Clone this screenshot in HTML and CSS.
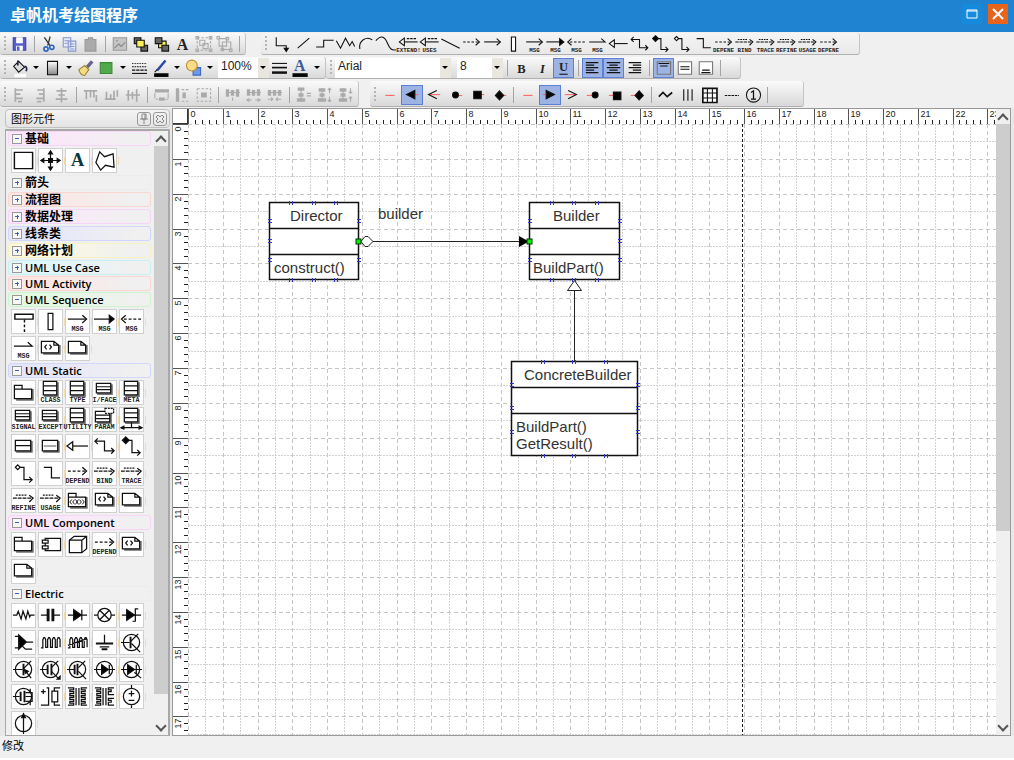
FILE: index.html
```html
<!DOCTYPE html>
<html lang="zh-CN">
<head>
    <meta charset="UTF-8">
    <meta name="viewport" content="width=device-width, initial-scale=1.0">
    <title>卓帆机考绘图程序</title>
    <link rel="stylesheet" href="styles.css">
</head>
<body>
    <!-- Title bar -->
    <header class="titlebar">
        <h1>卓帆机考绘图程序</h1>
        <button class="win-btn" aria-label="最大化"><svg width="12" height="10"><path d="M1 1h10v8H1zM1 2h10" /></svg></button>
        <button class="win-btn close" aria-label="关闭"><svg width="12" height="12"><path d="M1 1l10 10M11 1L1 11" /></svg></button>
    </header>

    <!-- Toolbars -->
    <div class="toolbars">
        <div class="bar-row">
            <div class="bar" data-icons="save | cut copy paste | image front back textA group ungroup |"></div>
            <div class="bar shapes" data-icons="elbow line step zigzag arc wave stereoLeft:EXTEND! stereoLeft:USES diag dashArrow openArrow bar openArrow:MSG solidArrow:MSG dashLeft:MSG halfArrow:MSG inherit elbowArrow elbowSolid elbowHollow elbowPlain dashArrow:DEPENE stereo:BIND stereo:TRACE stereo:REFINE stereo:USAGE dashArrow:DEPENE"></div>
        </div>
        <div class="bar-row">
            <div class="bar">
                <div class="icons" data-icons="bucket ^ shade ^ brush green ^ dashes pen ^ overlap ^"></div>
                <label class="combo zoom"><select aria-label="缩放"><option>100%</option></select></label>
                <div class="icons" data-icons="weights colorA ^"></div>
            </div>
            <div class="bar format">
                <label class="combo font"><select aria-label="字体"><option>Arial</option></select></label>
                <label class="combo size"><select aria-label="字号"><option>8</option></select></label>
                <div class="icons" data-icons="| bold italic *underline | *left *center right | *top middle bottom |"></div>
            </div>
        </div>
        <div class="bar-row tall">
            <div class="bar" data-icons="alignL alignR alignC | alignT alignB alignM | sameW sameH sameS | spaceH spaceH2 spaceH3 | spaceV spaceV2 spaceV3"></div>
            <div class="bar ends" data-icons="none *triL openL dotL squareL diamondL | none *triR openR dotR squareR diamondR | tilde vlines table dashline one |"></div>
        </div>
    </div>

    <main>
        <!-- Shape palette -->
        <aside class="palette">
            <div class="palette-head">
                <h2>图形元件</h2>
                <button aria-label="固定"><svg width="12" height="12"><path d="M4 1h4v5H4zM2 6h8M6 6v5M7 1v5" /></svg></button>
                <button aria-label="关闭面板"><svg width="12" height="12"><path d="M2 4l2-2 2 2 2-2 2 2-2 2 2 2-2 2-2-2-2 2-2-2 2-2z" /></svg></button>
            </div>
            <div class="palette-body">
                <div class="groups">
                    <details class="pink" open>
                        <summary>基础</summary>
                        <div class="tiles" data-icons="rect cross serifA polygon"></div>
                    </details>
                    <details class="plain"><summary>箭头</summary></details>
                    <details class="red"><summary>流程图</summary></details>
                    <details class="pink"><summary>数据处理</summary></details>
                    <details class="blue"><summary>线条类</summary></details>
                    <details class="yellow"><summary>网络计划</summary></details>
                    <details class="cyan latin"><summary>UML Use Case</summary></details>
                    <details class="red latin"><summary>UML Activity</summary></details>
                    <details class="green latin" open>
                        <summary>UML Sequence</summary>
                        <div class="tiles" data-icons="lifeline bar openArrow:MSG solidArrow:MSG dashLeft:MSG halfArrow:MSG constraint note"></div>
                    </details>
                    <details class="blue latin" open>
                        <summary>UML Static</summary>
                        <div class="tiles" data-icons="folder class:CLASS class:TYPE smallClass:I/FACE class:META smallClass:SIGNAL smallClass:EXCEPT class:UTILITY param:PARAM assocClass box2 box3 inherit elbowArrow elbowSolid elbowHollow elbowPlain dashArrow:DEPEND stereo:BIND stereo:TRACE stereo:REFINE stereo:USAGE folderX constraint note"></div>
                    </details>
                    <details class="pink latin" open>
                        <summary>UML Component</summary>
                        <div class="tiles" data-icons="folder component cube dashArrow:DEPEND constraint note"></div>
                    </details>
                    <details class="plain latin" open>
                        <summary>Electric</summary>
                        <div class="tiles" data-icons="resistor capacitor diode lamp zener thyristor coil coilCore ground npn pnp igbtN igbtP ledN ledP mosfet relay trafo trafo2 source current"></div>
                    </details>
                </div>
                <div class="scroll">
                    <button class="up" aria-label="向上滚动"></button>
                    <div class="thumb"></div>
                    <button class="down" aria-label="向下滚动"></button>
                </div>
            </div>
        </aside>

        <!-- Drawing area -->
        <section class="canvas">
            <div class="corner"></div>
            <svg class="ruler" id="rulerX"></svg>
            <svg class="ruler" id="rulerY"></svg>
            <svg class="paper">
                <g id="grid"></g>
                <path class="page-edge" d="M554.5 0V3000" />

                <g class="uml">
                    <path class="box" d="M81.5 78.5h89v77h-89zM81.5 104.5h89M81.5 130.5h89" />
                    <text x="102" y="97">Director</text>
                    <text x="86" y="149">construct()</text>

                    <path class="box" d="M341.5 78.5h90v77h-90zM341.5 104.5h90M341.5 130.5h90" />
                    <text x="365" y="97">Builder</text>
                    <text x="345" y="149">BuildPart()</text>

                    <path class="box" d="M323.5 237.5h126v94h-126zM323.5 263.5h126M323.5 289.5h126" />
                    <text x="336" y="256">ConcreteBuilder</text>
                    <text x="328" y="308">BuildPart()</text>
                    <text x="328" y="325">GetResult()</text>

                    <text x="190" y="95">builder</text>
                </g>

                <g id="marks"></g>

                <path class="wire" d="M184 117.5H332" />
                <path class="wire" fill="#fff" d="M173 117.5l4-5h3l5 5-5 5h-3z" />
                <path d="M331 112v11l10-5.500z" />
                <path class="wire" d="M386.500 166V238" />
                <path class="wire" fill="#fff" d="M386.500 156.500l7 10h-14z" />
                <rect class="handle" x="168" y="115" width="5" height="5" />
                <rect class="handle" x="339" y="115" width="5" height="5" />
            </svg>
            <div class="scroll">
                <button class="up" aria-label="向上滚动"></button>
                <div class="thumb"></div>
                <button class="down" aria-label="向下滚动"></button>
            </div>
        </section>
    </main>

    <footer class="status">修改</footer>

    <script src="script.js"></script>
</body>
</html>
```
FILE: styles.css
```css
* {
    box-sizing: border-box;
}

body {
    margin: 0;
    height: 100vh;
    display: flex;
    flex-direction: column;
    padding-bottom: 2px;
    overflow: hidden;
    background: #fff;
    color: #000;
    font-family: "Liberation Sans", "Noto Sans CJK SC", sans-serif;
    font-size: 12px;
}

button {
    padding: 0;
    border: none;
    background: none;
    color: inherit;
    flex: none;
}

h1, h2 {
    margin: 0;
    flex: 1;
    font-weight: normal;
}

svg {
    display: block;
}

/* Title bar */
.titlebar {
    display: flex;
    align-items: center;
    height: 32px;
    flex: none;
    padding: 0 6px 4px 10px;
    gap: 6px;
    background: #1f83d2;
}

.titlebar h1 {
    padding-top: 4px;
    color: #fff;
    font-size: 16px;
    line-height: 24px;
    font-weight: bold;
}

.win-btn {
    display: grid;
    place-items: center;
    width: 20px;
    height: 20px;
    background: #168bdc;
}

.win-btn path {
    fill: none;
    stroke: #fff;
}

.win-btn.close {
    background: #e8641b;
}

.win-btn.close path {
    stroke-width: 2;
}

/* Toolbars */
.toolbars {
    display: flex;
    flex-direction: column;
    flex: none;
    gap: 2px;
    padding: 1px 0;
    background: #f0f0f0;
}

.bar-row {
    display: flex;
    height: 22px;
}

.bar-row.tall {
    height: 26px;
}

.bar {
    display: flex;
    align-items: center;
    padding-right: 2px;
    background: linear-gradient(#fafafa, #d9d9d9);
    border-bottom: 1px solid #b0b0b0;
    border-right: 1px solid #c4c4c4;
    border-radius: 3px;
}

.tall .bar {
    padding-top: 2px;
}

.bar::before {
    content: "";
    width: 2px;
    height: 16px;
    margin: 0 3px 0 4px;
    background: repeating-linear-gradient(#b4b4b4 0 2px, transparent 2px 4px);
}

.bar.shapes {
    margin-left: 15px;
    padding-right: 20px;
    background: linear-gradient(#f4f4f4, #e9e9e9);
}

.bar.shapes::before {
    margin-right: 5px;
}

.bar.format {
    padding-right: 16px;
}

.bar.ends {
    margin-left: 11px;
    padding-right: 32px;
}

.icons {
    display: flex;
    align-items: center;
}

.tool {
    width: 21px;
    height: 20px;
}

.tool svg {
    width: 21px;
    height: 20px;
}

.ends .tool {
    width: 22px;
}

.tool.on {
    background: #9db3e4;
    outline: 1px solid #5b80d6;
    outline-offset: -1px;
}

.sep {
    width: 1px;
    height: 16px;
    margin: 0 3px 0 4px;
    background: #a4a4a4;
}

.ends .sep {
    margin: 0 3px 0 2px;
}

.drop {
    width: 12px;
    height: 20px;
}

.drop::after,
.combo::after {
    content: "";
    display: block;
    width: 0;
    margin: 0 auto;
    border: 3px solid transparent;
    border-top-color: #000;
    border-bottom: none;
}

.combo {
    display: flex;
    align-items: center;
    height: 20px;
    margin-left: 2px;
    background: linear-gradient(90deg, #fff calc(100% - 11px), #e9e6e0 0);
}

.combo::after {
    margin: 0 3px 0 2px;
}

.combo select {
    flex: 1;
    min-width: 0;
    height: 20px;
    padding: 0 0 3px 3px;
    border: none;
    outline: none;
    appearance: none;
    background: none;
    color: #222;
    font: 12px "Liberation Sans", sans-serif;
}

.combo.zoom {
    width: 51px;
}

.combo.font {
    width: 116px;
    margin-left: 0;
}

.combo.size {
    width: 46px;
    margin-left: 6px;
}

/* Icons */
.icon {
    fill: none;
    stroke: #111;
    stroke-width: 1.3;
    overflow: visible;
}

.icon .k { fill: #000; }
.icon .w { fill: #fff; }
.icon .thick { stroke-width: 2; }
.icon .gray { stroke: #aaa; }
.icon .wide { stroke: #aaa; stroke-width: 4; }
.icon .red { stroke: #ff6464; }
.icon .shadow { fill: #777; stroke: #777; }

.icon text {
    fill: #222;
    stroke: none;
    text-anchor: middle;
    font: bold 7px "Liberation Mono", monospace;
}

.icon text.serif {
    font: bold 19px "Liberation Serif", serif;
}

.icon text.letter {
    font: bold 15px "Liberation Serif", serif;
}

/* Main area */
main {
    flex: 1;
    min-height: 0;
    display: flex;
    padding-right: 3px;
    background: #e8e8e8;
}

/* Palette */
.palette {
    display: flex;
    flex-direction: column;
    width: 165px;
    flex: none;
    margin: 1px 2px 0 5px;
}

.palette-head {
    display: flex;
    align-items: center;
    gap: 2px;
    height: 19px;
    flex: none;
    padding: 0 2px 0 5px;
    border: 1px solid #c0c0c0;
    border-radius: 4px;
    background: linear-gradient(#f4f4f4, #e4e4e4);
}

.palette-head h2 {
    font-size: 11px;
    line-height: 16px;
}

.palette-head button {
    display: grid;
    place-items: center;
    width: 14px;
    height: 14px;
    border: 1px solid #999;
    border-radius: 3px;
}

.palette-head path {
    fill: none;
    stroke: #888;
}

.palette-body {
    display: flex;
    flex: 1;
    min-height: 0;
    margin-top: 1px;
    border: 1px solid #a8a8a8;
    border-width: 2px 2px 1px 1px;
    background: #f0f0f0;
}

.groups {
    flex: 1;
    min-width: 0;
    overflow: hidden;
    padding: 0 3px 0 2px;
}

summary {
    display: flex;
    align-items: center;
    gap: 3px;
    height: 15px;
    margin-bottom: 2px;
    padding-left: 3px;
    border: 1px solid var(--edge);
    border-radius: 3px;
    background: linear-gradient(90deg, var(--tint) 20%, #f0f0f0 90%);
    font-family: "Open Sans", "Noto Sans CJK SC", sans-serif;
    font-size: 12px;
    line-height: 13px;
    font-weight: bold;
    list-style: none;
}

.latin summary {
    font-size: 11px;
    font-weight: 600;
    margin-bottom: 1px;
}

.latin[open] summary {
    margin-bottom: 2px;
}

/* plus / minus box */
summary::before {
    content: "";
    width: 8px;
    height: 8px;
    flex: none;
    border: 1px solid #999;
    background:
        linear-gradient(#3f63b0, #3f63b0) center / 4px 1px no-repeat,
        linear-gradient(#3f63b0, #3f63b0) center / 1px 4px no-repeat,
        #f8f8f8;
}

[open] > summary::before {
    background: linear-gradient(#3f63b0, #3f63b0) center / 4px 1px no-repeat, #f8f8f8;
}

.plain { --tint: #f0f0f0; --edge: #ececec; }
.pink { --tint: #fce6fb; --edge: #f8d4f8; }
.red { --tint: #fde6e3; --edge: #fad6d0; }
.blue { --tint: #e4e6fa; --edge: #d2d6fa; }
.yellow { --tint: #fcfae0; --edge: #f6f2c4; }
.cyan { --tint: #e0f7fa; --edge: #c8f0f4; }
.green { --tint: #e2fae2; --edge: #ccf4cc; }

.tiles {
    display: grid;
    grid-template-columns: repeat(5, 25px);
    gap: 2px;
    padding: 0 0 2px 3px;
}

.tile {
    position: relative;
    height: 25px;
    border: 1px solid #d0d0d0;
    background: #fff;
}

.tile svg {
    width: 23px;
    height: 23px;
}

.tile::after {
    content: "";
    position: absolute;
    right: -3px;
    top: 8px;
    width: 1px;
    height: 8px;
    background: #f2dcae;
}

/* Scroll bars */
.scroll {
    display: flex;
    flex-direction: column;
    width: 14px;
    flex: none;
    background: #f0f0f0;
}

.scroll button {
    display: grid;
    place-items: center;
    height: 15px;
}

.scroll button::before {
    content: "";
    width: 6px;
    height: 6px;
    border: solid #555;
    border-width: 2px 0 0 2px;
    transform: translateY(2px) rotate(45deg);
}

.scroll .down::before {
    transform: translateY(-2px) rotate(225deg);
}

.scroll .thumb {
    height: 548px;
    background: #cdcdcd;
}

.scroll .down {
    margin-top: auto;
}

/* Canvas */
.canvas {
    flex: 1;
    min-width: 0;
    display: grid;
    grid-template: 15px minmax(0, 1fr) / 15px minmax(0, 1fr) 14px;
    border: 1px solid #999;
    background: #fff;
}

.corner {
    border: solid #333;
    border-width: 0 1px 1px 0;
}

.ruler,
.paper {
    width: 100%;
    height: 100%;
    overflow: hidden;
}

#rulerY {
    grid-column: 1;
    grid-row: 2;
}

.paper {
    grid-column: 2;
    grid-row: 2;
}

.ruler path {
    stroke: #222;
}

.ruler .major {
    stroke: #555;
}

.ruler text {
    fill: #222;
    font-size: 9px;
}

#rulerY text {
    text-anchor: end;
}

.canvas .scroll {
    grid-column: 3;
    grid-row: 1 / 3;
}

.canvas .thumb {
    height: 407px;
}

#grid path {
    stroke: #d2d2d2;
    stroke-dasharray: 2 1;
}

#grid .major {
    stroke: #c6c6c6;
    stroke-dasharray: 4 3;
}

.page-edge {
    stroke: #222;
    stroke-dasharray: 3 2;
}

.uml text {
    fill: #333;
    font-size: 15px;
}

.uml .box {
    fill: #fff;
    stroke: #111;
    stroke-width: 1.5;
}

.wire {
    stroke: #222;
}

.handle {
    fill: #0e0;
    stroke: #030;
}

#marks path {
    stroke: #3434c8;
}

/* Status bar */
.status {
    height: 22px;
    flex: none;
    padding-left: 2px;
    background: #f0f0f0;
    font-size: 11px;
    line-height: 20px;
}
```
FILE: script.js
```js
// Icon drawings, all on a 24 x 24 box
const circle = '<circle cx="12" cy="12" r="8.500"/>';
const elbow = '<path d="M6 5.500h6.500v13H21"/>';
const dashes = '<path stroke-dasharray="3 2" d="M2 9.500h18"/>';
const head = '<path d="M17 5.500l4.500 4-4.500 4"/>';

const icons = {
    save: '<path fill="#5a5fc8" stroke="#3c40a8" d="M4.500 4.500h15v15h-15z"/><path fill="#fff" stroke="none" d="M8 4h8v7H8zM8 14h8v6H8z"/><path fill="#5a5fc8" stroke="none" d="M9 15h3v5H9z"/>',
    cut: '<path stroke="#333" stroke-width="1.500" d="M7 4l7 10M14 3l-3 11"/><g stroke="#2c68c0" stroke-width="2"><circle cx="9" cy="18" r="2.500"/><circle cx="16" cy="16" r="2.500"/></g>',
    copy: '<g fill="#e8ecf8" stroke="#8496cc"><path d="M4.500 4.500h9v11h-9zM10.500 8.500h9v12h-9z"/><path d="M6 8h5M6 11h4M12 12h6M12 15h6M12 18h6"/></g>',
    paste: '<path fill="#aaa" stroke="#999" d="M5.500 6.500h4v-2h5v2h4v14h-13z"/>',
    image: '<path fill="#c4c4c4" stroke="#999" d="M4.500 4.500h16v15h-16z"/><path stroke="#888" d="M6 17l5-5 3 3 5-5M8 8h2"/>',
    front: '<path fill="#666" d="M4.500 4.500h8v7h-8zM12.500 13.500h8v7h-8z"/><path fill="#ffee58" d="M7.500 7.500h9v8h-9z"/>',
    back: '<path fill="#ffee58" d="M8.500 8.500h9v8h-9z"/><path fill="#666" d="M4.500 4.500h8v7h-8zM12.500 13.500h8v7h-8z"/>',
    textA: '<text class="serif" x="12" y="19">A</text>',
    group: '<g class="gray"><path stroke-dasharray="3 2" d="M4.500 4.500h16v15h-16z"/><path d="M7.500 7.500h6v6h-6zM11.500 11.500h6v6h-6zM3 3h3v3H3zM19 3h3v3h-3zM3 18h3v3H3zM19 18h3v3h-3z"/></g>',
    ungroup: '<g class="gray"><path d="M5.500 5.500h9v9h-9zM9.500 9.500h10v9h-10zM3 3h3v3H3zM14 4h3v3h-3zM18 18h3v3h-3zM8 17h3v3H8z"/></g>',

    // connectors and lines
    elbow: '<path d="M4.500 4v10h12v5"/><path class="k" d="M14 17h5l-2.500 4z"/>',
    line: '<path d="M5 17L19 5"/>',
    step: '<path d="M2 15.500h9v-8h12"/>',
    zigzag: '<path d="M1 8l5 9 6-12 5 9 3-5 3 6"/>',
    arc: '<path d="M4 18C2 8 12 2 19 7"/>',
    wave: '<path d="M-2 8c7-8 11-4 14 3s5 9 10 8"/>',
    stereoLeft: '<path class="w" d="M7 5v9L1 9.500z"/><path d="M7 9.500h16"/><path stroke-dasharray="3 1" d="M10 5.500h12"/>',
    diag: '<path d="M1 6l22 11"/>',
    dashArrow: dashes + head,
    openArrow: '<path d="M2 9.500h19"/>' + head,
    solidArrow: '<path d="M1 9.500h18"/><path class="k" d="M17 5.500v8l5-4z"/>',
    halfArrow: '<path d="M2 9.500h19l-4.500-4"/>',
    dashLeft: '<path stroke-dasharray="3 2" d="M4 9.500h19"/><path d="M6 5.500l-4.500 4 4.500 4"/>',
    bar: '<path class="w" d="M9.500 3.500h5v17h-5z"/>',
    inherit: '<path d="M7 11.500h16"/><path class="w" d="M7 7v9l-6-4.500z"/>',
    elbowArrow: '<path d="M2 6.500h10v10h10M5 3.500l-3 3 3 3M19 13.500l3 3-3 3"/>',
    elbowSolid: elbow + '<path class="k" d="M6 2l3.500 3.500L6 9 2.500 5.500z"/><path d="M18 15.500l3 3-3 3"/>',
    elbowHollow: elbow + '<path class="w" d="M6 3l2.500 2.500L6 8 3.500 5.500z"/><path d="M18 15.500l3 3-3 3"/>',
    elbowPlain: '<path d="M5 5.500h8v11h9"/>',
    stereo: '<path stroke-dasharray="4 1" d="M1 9.500h20"/><path stroke-dasharray="2 1" d="M4 6.500h11"/><path d="M18 6.500l4 3-4 4"/>',

    // fill and line style
    bucket: '<path fill="#ddd" d="M5 10l6-6 7 7-7 6z"/><path stroke="#225" stroke-width="2" d="M10 3v6M18 10c3 0 3 3 2 6"/><path fill="#fff" stroke="none" d="M6 19h14v4H6z"/>',
    shade: '<linearGradient id="sh" x2="0" y2="1"><stop stop-color="#fff"/><stop offset="1" stop-color="#888"/></linearGradient><path fill="url(#sh)" d="M6 4h12v16H6z"/>',
    brush: '<path fill="#f4dc80" stroke="#a08030" d="M4 14l7-5 5 5-5 7c-3 0-6-3-7-7z"/><path stroke="#668" stroke-width="4" d="M14 11l6-7"/>',
    green: '<path fill="#52a84c" stroke="#3c8a38" d="M4.500 5.500h14v13h-14z"/>',
    dashes: '<path stroke-dasharray="1 1" d="M3 6.500h18"/><path stroke-dasharray="2 1" d="M3 10.500h18"/><path stroke-dasharray="4 1" d="M3 14.500h18"/><path d="M3 18.500h18"/>',
    pen: '<path stroke="#2c48a8" stroke-width="3" d="M8 15L18 3"/><path d="M5 17l3-3"/><path class="k" d="M5 19h16v3H5z"/>',
    overlap: '<path fill="#6c9ae8" stroke="#3c68c0" d="M11.500 11.500h9v9h-9z"/><circle cx="10" cy="9" r="6.500" fill="#f8dc88" stroke="#c09030"/>',
    weights: '<path d="M3 6.500h18"/><path class="thick" d="M3 11.500h18"/><path stroke-width="3" d="M3 17.500h18"/>',
    colorA: '<text class="serif" style="fill:#3a5a9c" x="11" y="16">A</text><path class="k" d="M3 19h17v3H3z"/>',

    // text format
    bold: '<text class="letter" x="12" y="18">B</text>',
    italic: '<text class="letter" x="12" y="18"><tspan font-style="italic">I</tspan></text>',
    underline: '<text class="letter" x="12" y="16">U</text><path d="M7 19.500h10"/>',
    left: '<path d="M4 5.500h15M4 8.500h10M4 11.500h15M4 14.500h10M4 17.500h15"/>',
    center: '<path d="M4 5.500h16M7 8.500h10M4 11.500h16M7 14.500h10M4 17.500h16"/>',
    right: '<path d="M5 5.500h15M10 8.500h10M5 11.500h15M10 14.500h10M5 17.500h15"/>',
    top: '<path stroke="#777" d="M4.500 4.500h16v15h-16z"/><path d="M6 6.500h13M8 9.500h9"/>',
    middle: '<path class="w" stroke="#777" d="M4.500 4.500h16v15h-16z"/><path d="M7 10.500h11M7 13.500h11"/>',
    bottom: '<path class="w" stroke="#777" d="M4.500 4.500h16v15h-16z"/><path d="M8 14.500h9M7 17.500h11"/>',

    // arrange
    alignL: '<path class="gray thick" d="M7 4v16M7 6h9M7 11h6M7 16h9M10 20h5"/>',
    alignR: '<path class="gray thick" d="M16 4v16M16 6H8M16 11h-6M16 16H7M8 20h5"/>',
    alignC: '<path class="gray thick" d="M12 4v17M6 7h12M8 12h8M5 17h14"/>',
    alignT: '<path class="gray thick" d="M4 7h16M7 7v10M12 7v8M16 7v8M19 12v8"/>',
    alignB: '<path class="gray thick" d="M4 17h13M6 17V8M11 17v-6M15 17V7M19 6v8"/>',
    alignM: '<path class="gray thick" d="M4 12h17M7 6v13M12 8v9M17 5v15"/>',
    sameW: '<path class="wide" d="M4 7h17M9 17h7"/><path class="gray" d="M4 10v6M20 10v6M5 17h3M17 17h3"/>',
    sameH: '<path class="wide" d="M6 4v16M14 9v7"/><path class="gray" stroke-dasharray="3 2" d="M11 5.500h9M11 19.500h9"/>',
    sameS: '<path class="gray" stroke-dasharray="3 2" d="M4.500 4.500h16v15h-16z"/><path stroke="#aaa" stroke-width="6" d="M9 12h7"/>',
    spaceH: '<path class="wide" d="M6 5v9M12 6v7M18 5v9"/><path class="gray" d="M4 9h17M12 15v4"/>',
    spaceH2: '<path class="wide" d="M6 5v8M12 6v7M18 5v8"/><path class="gray" d="M4 9h17M4 18h6M14 18h6M7 16l-3 2 3 2M17 16l3 2-3 2"/>',
    spaceH3: '<path class="wide" d="M6 6v7M12 6v7M18 6v7"/><path class="gray" d="M4 9h17M4 17h6M14 17h6M8 15l2 2-2 2M16 15l-2 2 2 2"/>',
    spaceV: '<path class="wide" d="M5 5h8M6 12h6M4 18h10"/><path class="gray" d="M9 4v16M16 10h5M16 13h5"/>',
    spaceV2: '<path class="wide" d="M5 6h8M6 12h6M4 18h10"/><path class="gray" d="M9 4v16M18 4v6M18 14v6M16 6l2-2 2 2M16 18l2 2 2-2"/>',
    spaceV3: '<path class="wide" d="M5 6h8M6 12h6M4 18h10"/><path class="gray" d="M9 4v16M18 4v6M18 14v6M16 8l2 2 2-2M16 16l2-2 2 2"/>',

    // line ends
    none: '<path class="red" d="M7 12.500h11"/>',
    triL: '<path class="red" d="M15 11.500h5"/><path class="k" d="M16 6.500v10l-10-5z"/>',
    openL: '<path class="red" d="M7 11.500h13"/><path d="M16 6.500l-10 5 10 5"/>',
    dotL: '<path class="red" d="M13 12.500h7"/><circle class="k" cx="12" cy="12" r="3.500"/>',
    squareL: '<path class="red" d="M13 11.500h7"/><path class="k" d="M7.500 7.500h9v9h-9z"/>',
    diamondL: '<path class="red" d="M13 12.500h7"/><path class="k" d="M12 7l5 5.500-5 5.500-5-5.500z"/>',
    triR: '<path class="red" d="M4 11.500h5"/><path class="k" d="M8 6.500v10l10-5z"/>',
    openR: '<path class="red" d="M4 11.500h13"/><path d="M8 6.500l10 5-10 5"/>',
    dotR: '<path class="red" d="M4 12.500h8"/><circle class="k" cx="14" cy="12" r="3.500"/>',
    squareR: '<path class="red" d="M4 12.500h6"/><path class="k" d="M9.500 8.500h9v9h-9z"/>',
    diamondR: '<path class="red" d="M4 12.500h6"/><path class="k" d="M14 7l5 5.500-5 5.500-5-5.500z"/>',
    tilde: '<path stroke-width="2" d="M4 14l5-5 5 5 6-5"/>',
    vlines: '<path d="M7.500 5v14M12.500 5v14M17.500 5v14"/>',
    table: '<path class="w thick" d="M4 4h17v17H4z"/><path d="M9.500 4v17M15.500 4v17M4 9.500h17M4 15.500h17"/>',
    dashline: '<path stroke-dasharray="3 1" d="M4 12.500h17"/>',
    one: '<circle cx="12" cy="12" r="8.500"/><path stroke-width="1.500" d="M9 9l3-2v10M9 17h6"/>',

    // basic shapes
    rect: '<path stroke-width="1.500" d="M2.500 3.500h19v17h-19z"/>',
    cross: '<path d="M2 12h20M12 2v20"/><path class="k" d="M10 10h4v4h-4zM19 10l3 2-3 2zM5 10l-3 2 3 2zM10 5l2-3 2 3zM10 19l2 3 2-3z"/>',
    serifA: '<text class="serif" style="fill:#08383c" x="12" y="18">A</text>',
    polygon: '<path d="M7 3l5 5 9-3 1 14-9-2-5 5-5-8z"/>',

    // UML
    lifeline: '<path class="w" stroke-width="1.500" d="M3 4.500h19v5H3z"/><path stroke-dasharray="3 2" stroke-width="1.500" d="M13 10v13"/>',
    note: '<path class="shadow" d="M5 9h17v9H5z"/><path class="w" d="M2.500 4.500h13l5 4v8h-18zM15.500 4.500v4h5"/>',
    constraint: '<path class="shadow" d="M5 9h17v9H5z"/><path class="w" d="M2.500 4.500h13l5 4v8h-18zM15.500 4.500v4h5"/><path d="M8 8l-2 2.500L8 13M11 8l2 2.500-2 2.500"/>',
    folder: '<path class="shadow" d="M5 9h17v11H5z"/><path class="w" d="M2.500 8.500v-4h8v4h10v10h-18zM2.500 8.500h8"/>',
    folderX: '<path class="shadow" d="M5 9h17v11H5z"/><path class="w" d="M2.500 8.500v-4h8v4h10v10h-18zM2.500 8.500h8"/><path stroke-width="1" d="M6 11l-2 2.500 2 2.500M9 11l-2 2.500 2 2.500M10 11l3 5M13 11l-3 5M14 11l2 2.500-2 2.500M17 11l2 2.500-2 2.500"/>',
    class: '<path class="shadow" d="M6 2h14v14H6z"/><path class="w" d="M4.500 .5h14v14h-14zM4.500 5h14M4.500 10h14"/>',
    smallClass: '<path class="shadow" d="M5 4h15v10H5z"/><path class="w" d="M3.500 2.500h15v10h-15zM3.500 6h15M3.500 9h15"/>',
    param: '<path class="shadow" d="M5 5h14v11H5z"/><path class="w" d="M2.500 3.500h15v11h-15zM2.500 7.500h15M2.500 11h15"/><path class="w" stroke-dasharray="2 1" d="M12.500 .5h9v5h-9z"/>',
    assocClass: '<path class="shadow" d="M6 2h14v14H6z"/><path class="w" d="M4.500 .5h14v14h-14zM4.500 5h14M4.500 10h14"/><path d="M1 20.500h22M12 15v5"/><path class="k" d="M4 19v3l-3-1.500zM20 19v3l3-1.500z"/>',
    box2: '<path class="shadow" d="M5 7h16v11H5z"/><path class="w" d="M3.500 5.500h16v11h-16zM3.500 11h16"/>',
    box3: '<path class="shadow" d="M5 7h16v11H5z"/><path class="w" d="M3.500 5.500h16v11h-16z"/><path stroke="#777" d="M5 11.500h13"/>',
    component: '<path class="w" d="M6.500 5.500h16v13h-16z"/><path class="w" d="M3.500 7.500h6v3h-6zM3.500 13.500h6v3h-6z"/>',
    cube: '<path class="w" d="M3.500 7.500l5-4h13v13l-5 4h-13z"/><path d="M3.500 7.500h13v13M16.500 7.500l5-4"/>',

    // electric
    resistor: '<path d="M1 11.500h4l1.500-4 3 8 2-8 3 8 2-8 2 6 1-2h4"/>',
    capacitor: '<path d="M2 11.500h8M14 11.500h8"/><path stroke-width="3" d="M9.500 5v13M14.500 5v13"/>',
    diode: '<path d="M2 11.500h20M16.500 6v11"/><path class="k" d="M8 6v11l8-5.500z"/>',
    lamp: '<circle cx="12" cy="11.500" r="7"/><path d="M1 11.500h4M19 11.500h4M7 6.500l10 10M17 6.500l-10 10"/>',
    zener: '<path d="M2 11.500h20M19 5h-3v13h-3"/><path class="k" d="M7 6v11l8-5.500z"/>',
    thyristor: '<path d="M3 5.500h5M3 17.500h5M15 11.500h7M10 15l4 4h7"/><path class="k" d="M7 4v15l8-7.500z"/>',
    coil: '<path d="M2 17.500h2V9l1-2h1l1 2v8h2V9l1-2h1l1 2v8h2V9l1-2h1l1 2v8h2V9l1-2h1l1 2v8"/>',
    coilCore: '<path d="M2 17.500h2V9l1-2h1l1 2v8h2V9l1-2h1l1 2v8h2V9l1-2h1l1 2v8h2V9l1-2h1l1 2v8M2 15L22 8"/>',
    ground: '<path d="M12 4v9M7 16.500h10"/><path class="thick" d="M3 13h18M9 19h6"/>',
    npn: circle + '<path d="M1 12h9M19 3l-8 8M12 13l9 9"/><path class="thick" d="M11 6v12"/>',
    pnp: circle + '<path d="M1 12h10M20 3l-8 8 8 10"/><path class="thick" d="M12 6v12"/><path class="k" d="M13 12l4 2-3 2z"/>',
    igbtN: circle + '<path d="M1 12h8M20 3l-7 7M13 14l8 8"/><path class="thick" d="M9 7v10M13 6v12"/><path class="k" d="M19 22h3v-3z"/>',
    igbtP: circle + '<path d="M1 12h8M20 3l-7 7M13 14l8 8"/><path class="thick" d="M9 7v10M12 6v12"/>',
    ledN: circle + '<path d="M1 12h22M17 7v10"/><path class="k" d="M9 7v10l7-5z"/>',
    ledP: circle + '<path d="M1 12h22M17 7v10M15 15l7 6"/><path class="k" d="M8 7v10l7-5z"/>',
    mosfet: circle + '<path d="M1 12h7M14 8h7v9h-7M14 12h6M19 4v4M19 17v4"/><path class="thick" d="M9 7v10M13 6v12"/>',
    relay: '<path d="M2 7h5M4.500 4.500v5M8 3h2v18H2M22 3h-6v18h6"/><path class="w" d="M13.500 6.500h6v11h-6z"/>',
    trafo: '<path d="M2 3h6v2H4v2h4v2H4v2h4v2H4v2h4v2H4v2h4v2H2M22 3h-6v2h4v2h-4v2h4v2h-4v2h4v2h-4v2h4v2h-4v2h6"/><path d="M10.500 3v18M13.500 3v18"/>',
    trafo2: '<path d="M2 3h6v2H4v2h4v2H4v2h4v2H4v2h4v2H4v2h4v2H2M22 3h-6v2h3v2h-3v3h6M22 14h-6v2h3v2h-3v3h6"/><path d="M10.500 3v18M13.500 3v18"/>',
    source: circle + '<path d="M12 0v3M12 21v3M9 9h6M12 6v6M9 16h6"/>',
    current: circle + '<path d="M12 1v22"/><path class="k" d="M10 6l2-4 2 4z"/>'
};

// "name:CAPTION" entries, "*" marks a pressed button, "|" a separator, "^" a drop arrow
document.querySelectorAll('[data-icons]').forEach((box) => {
    const kind = box.classList.contains('tiles') ? 'tile' : 'tool';
    box.innerHTML = box.dataset.icons.split(' ').map((item) => {
        if (item === '|') return '<span class="sep"></span>';
        if (item === '^') return '<button class="drop" aria-label="更多"></button>';
        const on = item[0] === '*';
        const [name, caption] = item.replace('*', '').split(':');
        const text = caption ? `<text x="12" y="22">${caption}</text>` : '';
        return `<button class="${kind}${on ? ' on' : ''}" aria-label="${name}">
            <svg class="icon" viewBox="0 0 24 24">${icons[name]}${text}</svg></button>`;
    }).join('');
});

// Rulers and grid, one unit is a centimetre
const UNIT_X = 34.75;
const UNIT_Y = 34.85;

function drawGrid() {
    const paper = document.querySelector('.paper').getBoundingClientRect();
    let rulerX = '';
    let rulerY = '';
    let grid = '';

    for (let i = 0; i * UNIT_X < paper.width; i++) {
        const x = Math.round(i * UNIT_X) + 0.5;
        const half = Math.round((i + 0.5) * UNIT_X) + 0.5;
        rulerX += `<path class="major" d="M${x} 0V15"/><text x="${x + 2}" y="8">${i}</text>`;
        for (let t = 1; t < 5; t++) {
            rulerX += `<path d="M${Math.round((i + t / 5) * UNIT_X) + 0.5} 11v4"/>`;
        }
        grid += `<path d="M${half} 0V${paper.height}"/><path class="major" d="M${x} 0V${paper.height}"/>`;
    }

    for (let i = 0; i * UNIT_Y < paper.height; i++) {
        const y = Math.round(i * UNIT_Y) + 0.5;
        const half = Math.round((i + 0.5) * UNIT_Y) + 0.5;
        rulerY += `<path class="major" d="M0 ${y}H15"/><text transform="translate(8 ${y + 2}) rotate(-90)">${i}</text>`;
        for (let t = 1; t < 5; t++) {
            rulerY += `<path d="M11 ${Math.round((i + t / 5) * UNIT_Y) + 0.5}h4"/>`;
        }
        grid += `<path d="M0 ${half}H${paper.width}"/><path class="major" d="M0 ${y}H${paper.width}"/>`;
    }

    document.getElementById('rulerX').innerHTML = rulerX;
    document.getElementById('rulerY').innerHTML = rulerY;
    document.getElementById('grid').innerHTML = grid;
}

drawGrid();
window.addEventListener('resize', drawGrid);

// Connection points on the quarter marks of every class box
let marks = '';
[[81, 78, 89, 77], [341, 78, 90, 77], [323, 237, 126, 94]].forEach(([x, y, w, h]) => {
    [0.25, 0.5, 0.75].forEach((part) => {
        const px = Math.round(x + w * part);
        const py = Math.round(y + h * part);
        [y, y + h].forEach((edge) => {
            marks += `<path d="M${px - 1.5} ${edge - 1}v4M${px + 1.5} ${edge - 1}v4"/>`;
        });
        [x, x + w].forEach((edge) => {
            marks += `<path d="M${edge - 1} ${py - 1.5}h4M${edge - 1} ${py + 1.5}h4"/>`;
        });
    });
});
document.getElementById('marks').innerHTML = marks;
```
